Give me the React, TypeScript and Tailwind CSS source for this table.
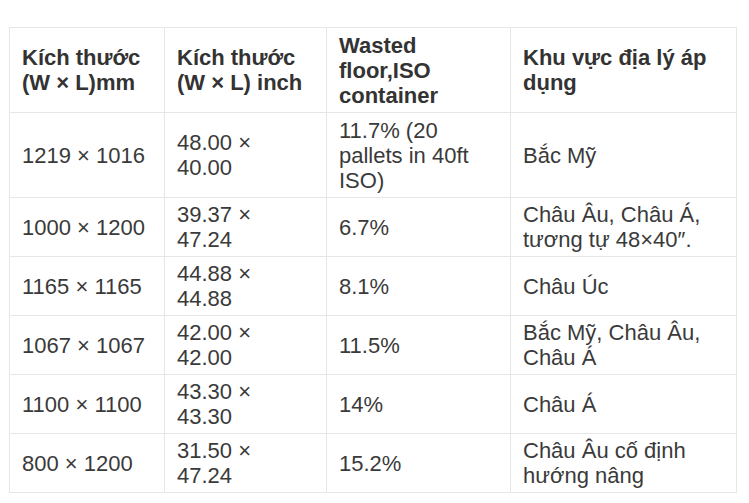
const rows: [string, string, string, string][] = [
  ['1219 × 1016', '48.00 × 40.00', '11.7% (20 pallets in 40ft ISO)', 'Bắc Mỹ'],
  ['1000 × 1200', '39.37 × 47.24', '6.7%', 'Châu Âu, Châu Á, tương tự 48×40″.'],
  ['1165 × 1165', '44.88 × 44.88', '8.1%', 'Châu Úc'],
  ['1067 × 1067', '42.00 × 42.00', '11.5%', 'Bắc Mỹ, Châu Âu, Châu Á'],
  ['1100 × 1100', '43.30 × 43.30', '14%', 'Châu Á'],
  ['800 × 1200', '31.50 × 47.24', '15.2%', 'Châu Âu cố định hướng nâng'],
];

const headers = ['Kích thước (W × L)mm', 'Kích thước (W × L) inch', 'Wasted floor,ISO container', 'Khu vực địa lý áp dụng'];

export default function App() {
  return (
    <div className="w-[749px] h-[503px] bg-white pt-[27px] pl-[9px] font-['Liberation_Sans',Arial,sans-serif] text-[22px] text-[#3a3a3a]">
      <table className="table-fixed border-collapse w-[727px]">
        <colgroup>
          <col className="w-[155px]" />
          <col className="w-[162px]" />
          <col className="w-[184px]" />
          <col className="w-[226px]" />
        </colgroup>
        <thead>
          <tr className="h-[85px]">
            {headers.map(h => (
              <th key={h} className="border border-[#e6e6e6] px-3 py-1 text-left align-middle font-bold leading-[25px] text-[#333]">
                {h}
              </th>
            ))}
          </tr>
        </thead>
        <tbody>
          {rows.map((r, i) => (
            <tr key={i} className={i === 0 ? 'h-[85px]' : 'h-[59px]'}>
              {r.map((c, j) => (
                <td key={j} className="border border-[#e6e6e6] px-3 py-1 align-middle leading-[25px]">
                  {j === 1 ? (
                    <>
                      {c.split(' × ')[0]} ×
                      <br />
                      {c.split(' × ')[1]}
                    </>
                  ) : (
                    c
                  )}
                </td>
              ))}
            </tr>
          ))}
        </tbody>
      </table>
    </div>
  );
}
